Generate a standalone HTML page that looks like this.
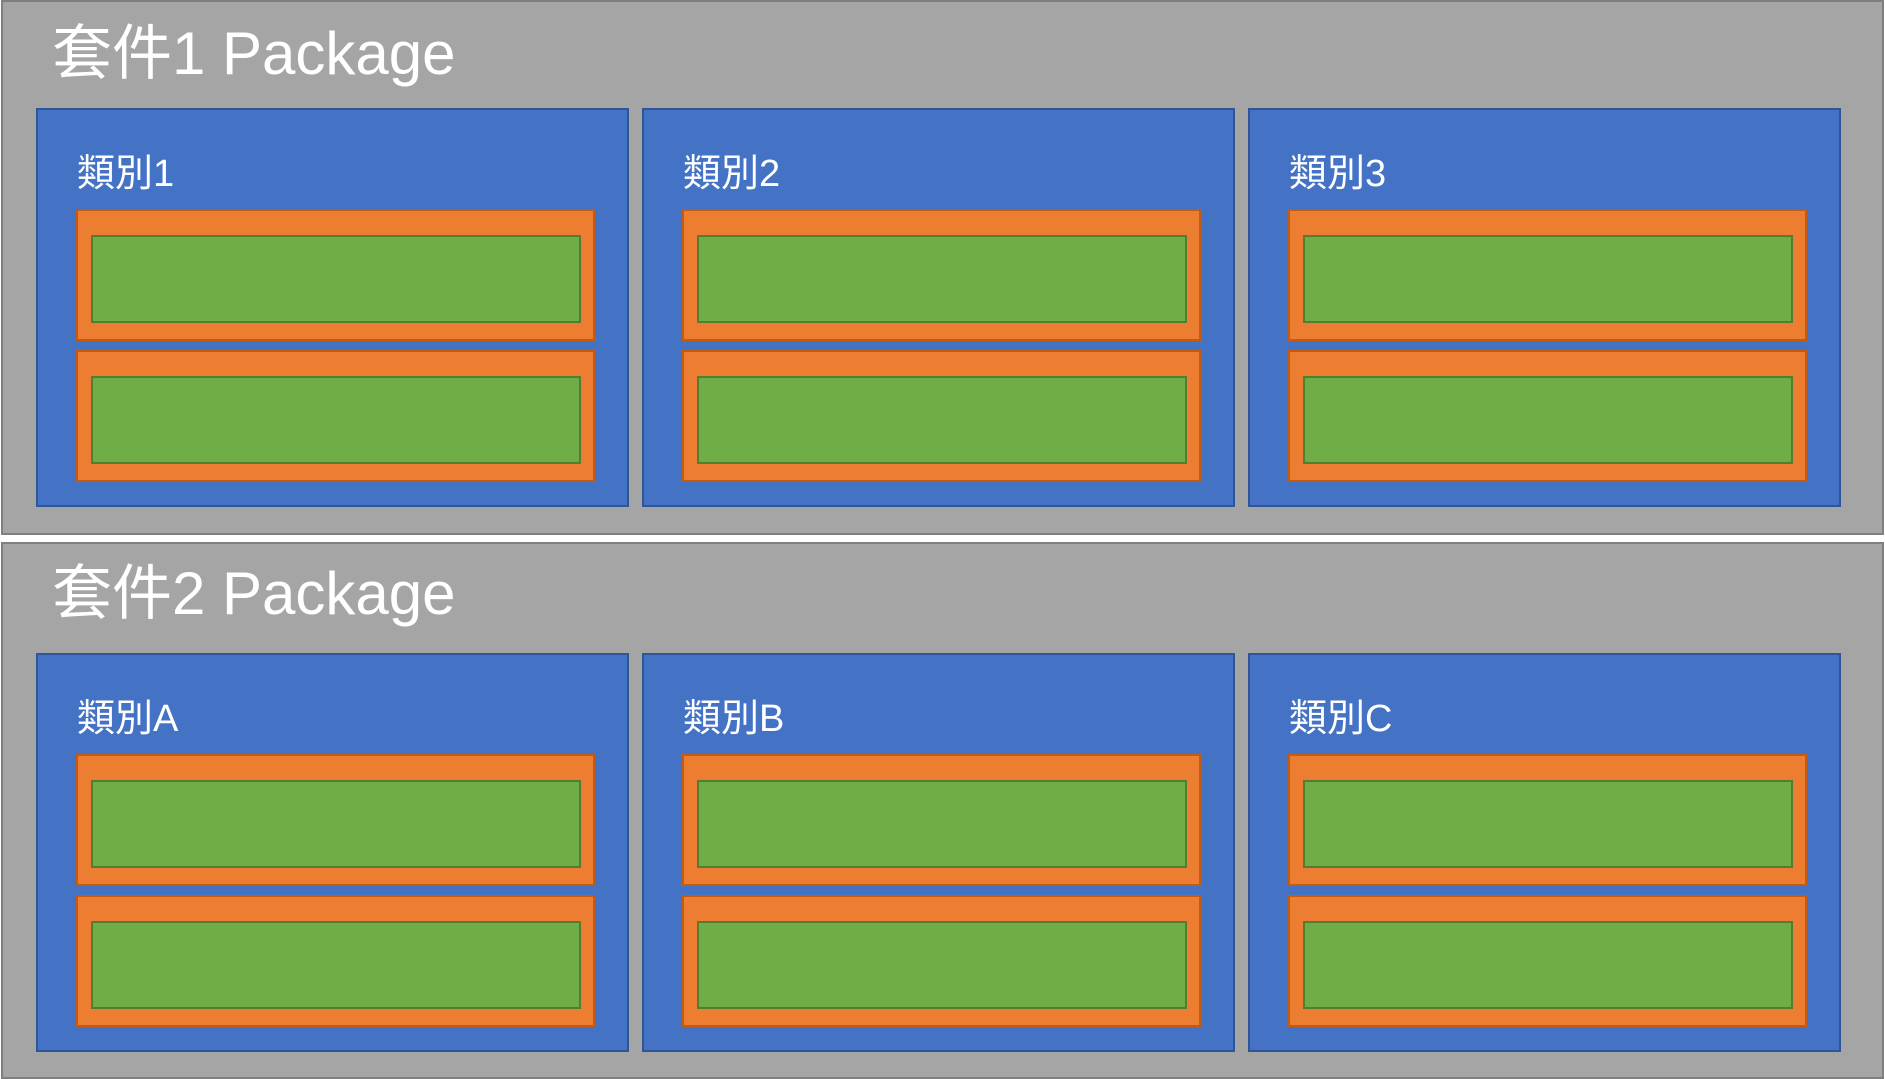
<!DOCTYPE html>
<html><head><meta charset="utf-8"><style>
*{margin:0;padding:0;box-sizing:border-box}
body{width:1885px;height:1079px;background:#fff;position:relative;overflow:hidden;font-family:"Liberation Sans","Noto Sans CJK TC",sans-serif;color:#fff}
.pkg{position:absolute;left:1px;width:1883px;background:#a5a5a5;border:2px solid #7f7f7f}
.t{position:absolute;left:49px;font-size:60px;line-height:1;white-space:nowrap}
.b{position:absolute;width:593px;height:399px;background:#4472c4;border:2px solid #2f5597}
.l{position:absolute;left:39px;top:45px;font-size:38px;line-height:1;white-space:nowrap}
.o{position:absolute;left:38px;width:519px;height:132px;background:#ed7d31;border:2px solid #c55a11}
.g{position:absolute;left:13px;top:24px;width:490px;height:88px;background:#70ad47;border:2px solid #507e32}
</style></head><body>
<div class="pkg" style="top:0;height:535px">
<div class="t" style="top:22px">套件1 Package</div>
<div class="b" style="left:33px;top:106px"><div class="l">類別1</div><div class="o" style="top:99px"><div class="g"></div></div><div class="o" style="top:240px"><div class="g"></div></div></div>
<div class="b" style="left:639px;top:106px"><div class="l">類別2</div><div class="o" style="top:99px"><div class="g"></div></div><div class="o" style="top:240px"><div class="g"></div></div></div>
<div class="b" style="left:1245px;top:106px"><div class="l">類別3</div><div class="o" style="top:99px"><div class="g"></div></div><div class="o" style="top:240px"><div class="g"></div></div></div>
</div>
<div class="pkg" style="top:542px;height:537px">
<div class="t" style="top:20px">套件2 Package</div>
<div class="b" style="left:33px;top:109px"><div class="l">類別A</div><div class="o" style="top:99px"><div class="g"></div></div><div class="o" style="top:240px"><div class="g"></div></div></div>
<div class="b" style="left:639px;top:109px"><div class="l">類別B</div><div class="o" style="top:99px"><div class="g"></div></div><div class="o" style="top:240px"><div class="g"></div></div></div>
<div class="b" style="left:1245px;top:109px"><div class="l">類別C</div><div class="o" style="top:99px"><div class="g"></div></div><div class="o" style="top:240px"><div class="g"></div></div></div>
</div>
</body></html>
